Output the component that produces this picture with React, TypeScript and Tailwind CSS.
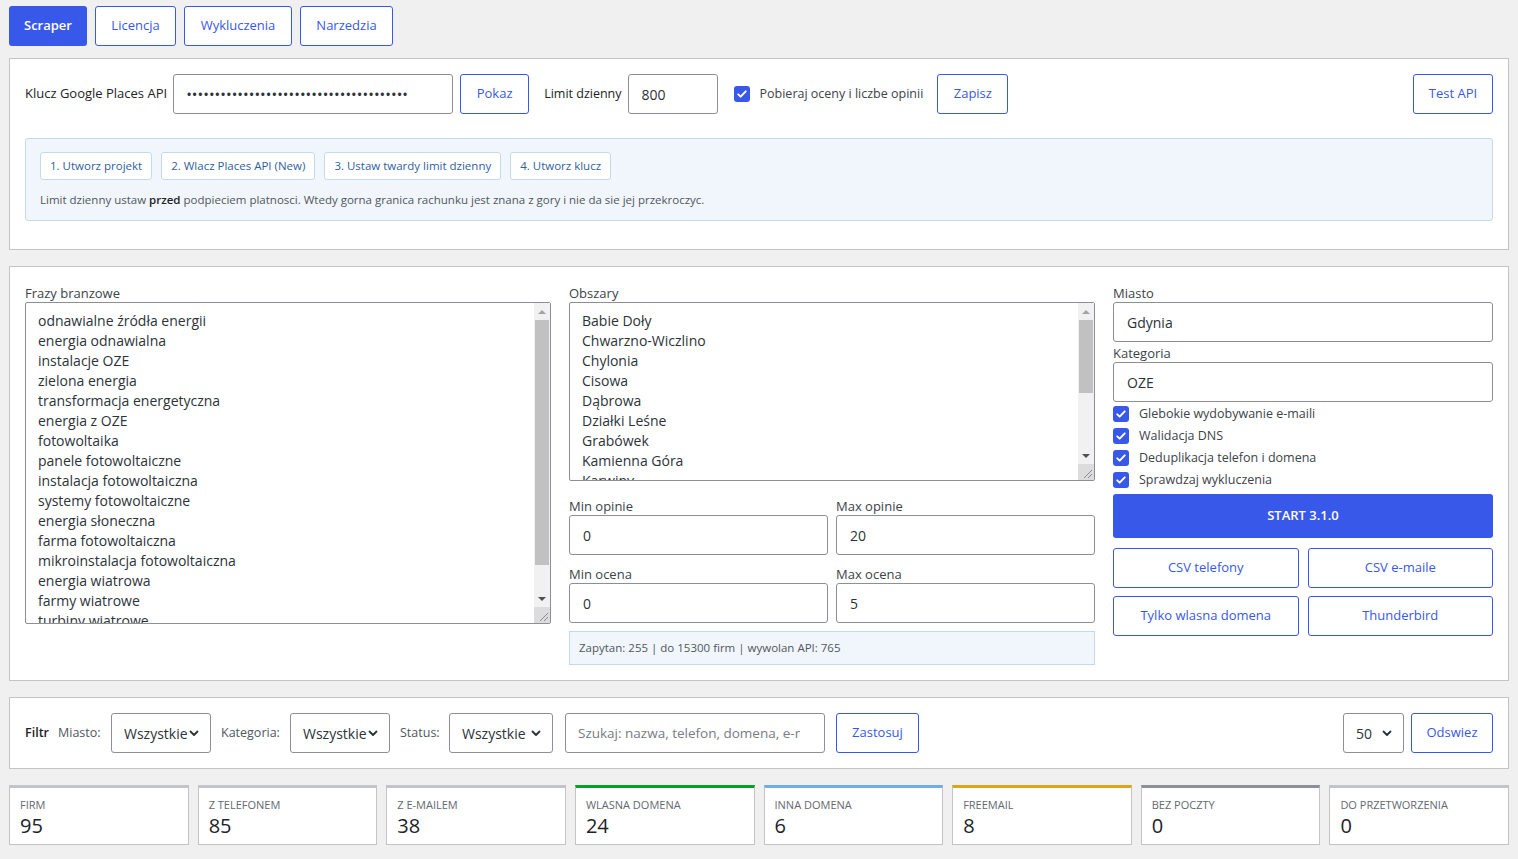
import type { ReactNode } from 'react'

const FRAZY = [
  'odnawialne źródła energii',
  'energia odnawialna',
  'instalacje OZE',
  'zielona energia',
  'transformacja energetyczna',
  'energia z OZE',
  'fotowoltaika',
  'panele fotowoltaiczne',
  'instalacja fotowoltaiczna',
  'systemy fotowoltaiczne',
  'energia słoneczna',
  'farma fotowoltaiczna',
  'mikroinstalacja fotowoltaiczna',
  'energia wiatrowa',
  'farmy wiatrowe',
  'turbiny wiatrowe',
  'pompy ciepła',
  'magazyny energii',
  'kolektory słoneczne',
]

const OBSZARY = [
  'Babie Doły',
  'Chwarzno-Wiczlino',
  'Chylonia',
  'Cisowa',
  'Dąbrowa',
  'Działki Leśne',
  'Grabówek',
  'Kamienna Góra',
  'Karwiny',
  'Leszczynki',
  'Mały Kack',
  'Obłuże',
  'Oksywie',
  'Orłowo',
  'Pogórze',
]

const STATS = [
  { label: 'Firm', value: '95', bar: 'border-t-[#c3c4c7]' },
  { label: 'Z telefonem', value: '85', bar: 'border-t-[#c3c4c7]' },
  { label: 'Z e-mailem', value: '38', bar: 'border-t-[#c3c4c7]' },
  { label: 'Wlasna domena', value: '24', bar: 'border-t-[#00a32a]' },
  { label: 'Inna domena', value: '6', bar: 'border-t-[#72aee6]' },
  { label: 'Freemail', value: '8', bar: 'border-t-[#dba617]' },
  { label: 'Bez poczty', value: '0', bar: 'border-t-[#8c8f94]' },
  { label: 'Do przetworzenia', value: '0', bar: 'border-t-[#c3c4c7]' },
]

function OutlineBtn({ children, className = '' }: { children: ReactNode; className?: string }) {
  return (
    <button
      type="button"
      className={`h-10 shrink-0 rounded-[3px] border border-[#3858e9] bg-white text-[13px] text-[#3858e9] ${className}`}
    >
      {children}
    </button>
  )
}

function Check({ label }: { label: string }) {
  return (
    <label className="flex h-[22px] items-center gap-[10px] text-[12.5px] text-[#3c434a]">
      <span className="flex h-4 w-4 shrink-0 items-center justify-center rounded-[3px] bg-[#3858e9]">
        <svg viewBox="0 0 16 16" className="h-3 w-3" fill="none" stroke="white" strokeWidth="2.6" strokeLinecap="round" strokeLinejoin="round">
          <path d="M3 8.5l3.2 3L13 4.5" />
        </svg>
      </span>
      {label}
    </label>
  )
}

function Select({ value, className = '' }: { value: string; className?: string }) {
  return (
    <div
      className={`flex h-10 shrink-0 items-center justify-between rounded-[3px] border border-[#8c8f94] bg-white pl-3 pr-[10px] text-[14px] text-[#2c3338] ${className}`}
    >
      <span>{value}</span>
      <svg viewBox="0 0 12 12" className="h-3 w-3" fill="none" stroke="#2c3338" strokeWidth="1.8" strokeLinecap="round" strokeLinejoin="round">
        <path d="M2.5 4.5L6 8l3.5-3.5" />
      </svg>
    </div>
  )
}

function Field({ label, value }: { label: string; value: string }) {
  return (
    <div className="flex flex-col">
      <span className="h-[18px] text-[13px] leading-[18px] text-[#3c434a]">{label}</span>
      <input
        readOnly
        value={value}
        className="h-10 w-full rounded-[3px] border border-[#8c8f94] bg-white px-[13px] text-[14px] text-[#2c3338] outline-none"
      />
    </div>
  )
}

// textarea with a drawn classic scrollbar (the headless browser hides native ones)
function ScrollArea({ lines, height, thumb }: { lines: string[]; height: string; thumb: string }) {
  return (
    <div className="relative">
      <textarea
        readOnly
        defaultValue={lines.join('\n')}
        className={`${height} block w-full resize-none overflow-hidden rounded-[2px] border border-[#8c8f94] pl-3 pr-6 pt-[8px] text-[14px] leading-[20px] text-[#2c3338] outline-none`}
      />
      <div className="pointer-events-none absolute top-px right-px bottom-px flex w-[16px] flex-col bg-[#f1f1f1]">
        <div className="flex h-[17px] items-center justify-center">
          <span className="h-0 w-0 border-x-[4px] border-b-[4px] border-x-transparent border-b-[#a3a3a3]" />
        </div>
        <div className="flex-1 px-[1px]">
          <div className={`${thumb} w-full bg-[#c1c1c1]`} />
        </div>
        <div className="flex h-[17px] items-center justify-center">
          <span className="h-0 w-0 border-x-[4px] border-t-[4px] border-x-transparent border-t-[#505050]" />
        </div>
        <div className="flex h-[16px] items-end justify-end bg-[#dcdcdc]">
          <svg viewBox="0 0 16 16" className="h-4 w-4" stroke="#8c8c8c" strokeWidth="1">
            <path d="M14 6L6 14M14 10L10 14" />
          </svg>
        </div>
      </div>
    </div>
  )
}

export default function App() {
  return (
    <div className="min-h-screen bg-[#f0f0f1] px-[9px] pt-[6px] pb-6 font-['Open_Sans',sans-serif] text-[13px] text-[#1d2327]">
      {/* tabs */}
      <div className="flex gap-2">
        <button type="button" className="h-10 w-[78px] rounded-[3px] bg-[#3858e9] text-[13px] font-semibold text-white">
          Scraper
        </button>
        <OutlineBtn className="w-[81px]">Licencja</OutlineBtn>
        <OutlineBtn className="w-[108px]">Wykluczenia</OutlineBtn>
        <OutlineBtn className="w-[93px]">Narzedzia</OutlineBtn>
      </div>

      {/* api key panel */}
      <section className="mt-3 border border-[#c3c4c7] bg-white px-[15px] pt-[15px] pb-[28px]">
        <div className="flex items-center">
          <span className="mr-[6px] text-[13px] text-[#1d2327]">Klucz Google Places API</span>
          <input
            type="password"
            readOnly
            value="AIzaSyD8x3kQ9vLmN2pR7tW4yZ1bC6eF0gH5jKa"
            className="h-10 w-[280px] rounded-[3px] border border-[#8c8f94] px-3 text-[15px] tracking-[0.05px] text-[#2c3338] outline-none"
          />
          <OutlineBtn className="ml-[7px] w-[69px]">Pokaz</OutlineBtn>
          <span className="ml-[15px] mr-[6px] text-[12.5px]">Limit dzienny</span>
          <input
            readOnly
            value="800"
            className="h-10 w-[90px] rounded-[3px] border border-[#8c8f94] px-[13px] text-[14px] text-[#2c3338] outline-none"
          />
          <div className="ml-4 mr-[14px]">
            <Check label="Pobieraj oceny i liczbe opinii" />
          </div>
          <OutlineBtn className="w-[71px]">Zapisz</OutlineBtn>
          <div className="flex-1" />
          <OutlineBtn className="w-[80px]">Test API</OutlineBtn>
        </div>

        <div className="mt-6 rounded-[3px] border border-[#c5d9ed] bg-[#f0f6fc] px-[14px] pt-[13px] pb-[11px]">
          <div className="flex gap-[9px]">
            {['1. Utworz projekt', '2. Wlacz Places API (New)', '3. Ustaw twardy limit dzienny', '4. Utworz klucz'].map(s => (
              <span
                key={s}
                className="flex h-7 items-center rounded-[3px] border border-[#c5d9ed] bg-white px-[9px] text-[11.5px] text-[#2f5f9e]"
              >
                {s}
              </span>
            ))}
          </div>
          <p className="mt-[11px] text-[11.5px] leading-[18px] text-[#50575e]">
            Limit dzienny ustaw <b className="font-semibold text-[#1d2327]">przed</b> podpieciem platnosci. Wtedy gorna granica rachunku jest znana z gory i nie da sie jej przekroczyc.
          </p>
        </div>
      </section>

      {/* main scraper panel */}
      <section className="mt-4 grid grid-cols-[1fr_1fr_380px] gap-x-[18px] border border-[#c3c4c7] bg-white px-[15px] pt-[17px] pb-[15px]">
        <div className="flex flex-col">
          <span className="h-[18px] text-[13px] leading-[18px] text-[#3c434a]">Frazy branzowe</span>
          <ScrollArea lines={FRAZY} height="h-[322px]" thumb="h-[245px]" />
        </div>

        <div className="flex flex-col">
          <span className="h-[18px] text-[13px] leading-[18px] text-[#3c434a]">Obszary</span>
          <ScrollArea lines={OBSZARY} height="h-[179px]" thumb="h-[73px]" />
          <div className="mt-[16px] grid grid-cols-2 gap-x-2 gap-y-[10px]">
            <Field label="Min opinie" value="0" />
            <Field label="Max opinie" value="20" />
            <Field label="Min ocena" value="0" />
            <Field label="Max ocena" value="5" />
          </div>
          <div className="mt-2 flex h-[34px] items-center border border-[#c5d9ed] bg-[#f0f6fc] px-[9px] text-[11.5px] text-[#50575e]">
            Zapytan: 255 | do 15300 firm | wywolan API: 765
          </div>
        </div>

        <div className="flex flex-col">
          <span className="h-[18px] text-[13px] leading-[18px] text-[#3c434a]">Miasto</span>
          <input
            readOnly
            value="Gdynia"
            className="h-10 w-full rounded-[3px] border border-[#8c8f94] px-[13px] text-[14px] text-[#2c3338] outline-none"
          />
          <span className="mt-[2px] h-[18px] text-[13px] leading-[18px] text-[#3c434a]">Kategoria</span>
          <input
            readOnly
            value="OZE"
            className="h-10 w-full rounded-[3px] border border-[#8c8f94] px-[13px] text-[14px] text-[#2c3338] outline-none"
          />
          <div className="mt-[1px] flex flex-col">
            <Check label="Glebokie wydobywanie e-maili" />
            <Check label="Walidacja DNS" />
            <Check label="Deduplikacja telefon i domena" />
            <Check label="Sprawdzaj wykluczenia" />
          </div>
          <button type="button" className="mt-[3px] h-11 w-full rounded-[3px] bg-[#3858e9] text-[13px] font-semibold text-white">
            START 3.1.0
          </button>
          <div className="mt-[10px] grid grid-cols-2 gap-x-[9px] gap-y-2">
            <OutlineBtn>CSV telefony</OutlineBtn>
            <OutlineBtn>CSV e-maile</OutlineBtn>
            <OutlineBtn>Tylko wlasna domena</OutlineBtn>
            <OutlineBtn>Thunderbird</OutlineBtn>
          </div>
        </div>
      </section>

      {/* filter bar */}
      <section className="mt-4 flex items-center border border-[#c3c4c7] bg-white p-[15px] text-[12.5px] whitespace-nowrap">
        <span className="w-[33px] shrink-0 font-semibold text-[#1d2327]">Filtr</span>
        <span className="w-[53px] shrink-0 text-[#50575e]">Miasto:</span>
        <Select value="Wszystkie" className="w-[100px]" />
        <span className="ml-[10px] w-[69px] shrink-0 text-[#50575e]">Kategoria:</span>
        <Select value="Wszystkie" className="w-[100px]" />
        <span className="ml-[10px] w-[49px] shrink-0 text-[#50575e]">Status:</span>
        <Select value="Wszystkie" className="w-[104px]" />
        <input
          readOnly
          placeholder="Szukaj: nazwa, telefon, domena, e-mail"
          className="ml-[12px] h-10 w-[260px] shrink-0 rounded-[3px] border border-[#8c8f94] pl-3 pr-[24px] text-[13.5px] text-[#2c3338] outline-none placeholder:text-[#787c82]"
        />
        <OutlineBtn className="ml-[11px] w-[83px]">Zastosuj</OutlineBtn>
        <div className="flex-1" />
        <div className="flex gap-[7px]">
          <Select value="50" className="w-[61px]" />
          <OutlineBtn className="w-[82px]">Odswiez</OutlineBtn>
        </div>
      </section>

      {/* stats */}
      <div className="mt-4 grid grid-cols-8 gap-[9px]">
        {STATS.map(s => (
          <div key={s.label} className={`h-[60px] border border-t-[3px] border-[#c3c4c7] bg-white px-[10px] pt-[10px] ${s.bar}`}>
            <p className="text-[11px] uppercase leading-[14px] text-[#646970]">{s.label}</p>
            <p className="mt-[2px] text-[20px] leading-[24px] text-[#1d2327]">{s.value}</p>
          </div>
        ))}
      </div>
    </div>
  )
}
